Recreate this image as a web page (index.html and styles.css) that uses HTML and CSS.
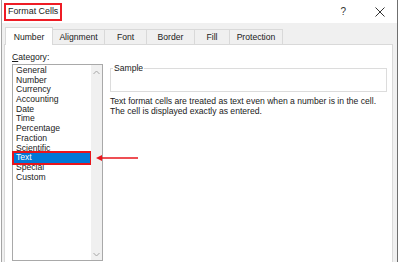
FILE: index.html
```html
<!DOCTYPE html>
<html lang="en">
<head>
    <meta charset="UTF-8">
    <title>Format Cells</title>
    <link rel="stylesheet" href="styles.css">
</head>
<body>
    <div class="dialog">
        <div class="titlebar">
            <span class="title">Format Cells</span>
            <span class="help">?</span>
            <svg class="close" width="10" height="10" viewBox="0 0 10 10">
                <path d="M0.5 0.5 L9.5 9.5 M9.5 0.5 L0.5 9.5" stroke="#333" stroke-width="1" fill="none" />
            </svg>
        </div>
        <div class="client">
            <div class="tabs">
                <div class="tab tab-number active">Number</div>
                <div class="tab tab-alignment">Alignment</div>
                <div class="tab tab-font">Font</div>
                <div class="tab tab-border">Border</div>
                <div class="tab tab-fill">Fill</div>
                <div class="tab tab-protection">Protection</div>
            </div>
            <div class="panel">
                <div class="category">
                    <div class="category-label"><u>C</u>ategory:</div>
                    <div class="listbox">
                        <ul class="items">
                            <li>General</li>
                            <li>Number</li>
                            <li>Currency</li>
                            <li>Accounting</li>
                            <li>Date</li>
                            <li>Time</li>
                            <li>Percentage</li>
                            <li>Fraction</li>
                            <li>Scientific</li>
                            <li class="selected">Text</li>
                            <li>Special</li>
                            <li>Custom</li>
                        </ul>
                        <div class="scrollbar">
                            <svg width="7" height="5" viewBox="0 0 7 5">
                                <path d="M0.5 4 L3.5 1 L6.5 4" stroke="#a6a6a6" fill="none" />
                            </svg>
                            <svg width="7" height="5" viewBox="0 0 7 5">
                                <path d="M0.5 1 L3.5 4 L6.5 1" stroke="#a6a6a6" fill="none" />
                            </svg>
                        </div>
                    </div>
                </div>
                <div class="details">
                    <fieldset class="sample">
                        <legend>Sample</legend>
                    </fieldset>
                    <p class="description">
                        Text format cells are treated as text even when a number is in the cell.<br>
                        The cell is displayed exactly as entered.
                    </p>
                </div>
                <svg class="arrow" width="44" height="8" viewBox="0 0 44 8">
                    <path d="M4 4 L42 4" stroke="#e8141b" stroke-width="1.6" />
                    <path d="M0 4 L6 1 L6 7 Z" fill="#e8141b" />
                </svg>
            </div>
        </div>
    </div>
</body>
</html>
```

FILE: styles.css
```css
html,
body {
    margin: 0;
    padding: 0;
    background-color: white;
}

body {
    width: 399px;
    height: 262px;
    overflow: hidden;
    font-family: "Liberation Sans", Arial, sans-serif;
    font-size: 8.6px;
    color: #1a1a1a;
}

.dialog {
    width: 395px;
    height: 270px;
    margin-left: 1px;
    border-left: 1px solid #a4a4a4;
    border-right: 1px solid #6f6f6f;
    display: flex;
    flex-direction: column;
}

.titlebar {
    height: 23px;
    display: flex;
    align-items: center;
    background-color: white;
}

.title {
    margin-left: 2px;
    padding: 1px 2px 2px 2px;
    border: 2px solid #ee1c25;
    font-size: 8.9px;
    line-height: 11px;
}

.help {
    margin-left: auto;
    margin-right: 29px;
    font-size: 10px;
    color: #333;
}

.close {
    margin-right: 12px;
}

.client {
    flex: 1;
    background-color: #f0f0f0;
    padding: 4px 4px 0 2px;
    display: flex;
    flex-direction: column;
}

.tabs {
    display: flex;
    align-items: flex-end;
    padding-left: 1px;
    height: 17px;
}

.tab {
    height: 14px;
    line-height: 14px;
    text-align: center;
    border: 1px solid #d9d9d9;
    border-bottom: none;
    margin-left: -1px;
    background-color: #f0f0f0;
}

.tab-number { width: 46px; margin-left: 0; }
.tab-alignment { width: 51px; }
.tab-font { width: 41px; }
.tab-border { width: 47px; }
.tab-fill { width: 34px; }
.tab-protection { width: 52px; }

.tab.active {
    height: 17px;
    line-height: 18px;
    background-color: white;
    position: relative;
    z-index: 1;
    margin-bottom: -1px;
}

.tab.active + .tab {
    margin-left: 0;
    border-left: none;
}

.panel {
    flex: 1;
    position: relative;
    background-color: white;
    border: 1px solid #d9d9d9;
    display: flex;
    padding: 0 5px 0 7px;
}

.category {
    width: 91px;
    display: flex;
    flex-direction: column;
}

.category-label {
    margin-top: 7px;
    height: 12px;
    line-height: 10px;
}

.listbox {
    height: 195px;
    border: 1px solid #a9a9a9;
    display: flex;
}

.items {
    flex: 1;
    list-style: none;
    margin: 0;
    padding: 1px 0 0 0;
}

.items li {
    height: 9.7px;
    line-height: 9.7px;
    padding-left: 3px;
}

.items li.selected {
    background-color: #0078d7;
    color: white;
    outline: 2px solid #e8141b;
    margin: 0 1px 0 1px;
    padding-left: 2px;
}

.scrollbar {
    width: 11px;
    background-color: #f0f0f0;
    display: flex;
    flex-direction: column;
    justify-content: space-between;
    align-items: center;
    padding: 5px 0 3px 0;
}

.details {
    flex: 1;
    margin-left: 7px;
}

.sample {
    margin: 19px 0 0 0;
    padding: 0;
    height: 26px;
    border: 1px solid #dcdcdc;
}

.sample legend {
    margin-left: 2px;
    padding: 0 1px;
    line-height: 8px;
}

.description {
    margin: 4px 0 0 0;
    line-height: 10px;
}

.arrow {
    position: absolute;
    left: 91px;
    top: 109px;
}
```
